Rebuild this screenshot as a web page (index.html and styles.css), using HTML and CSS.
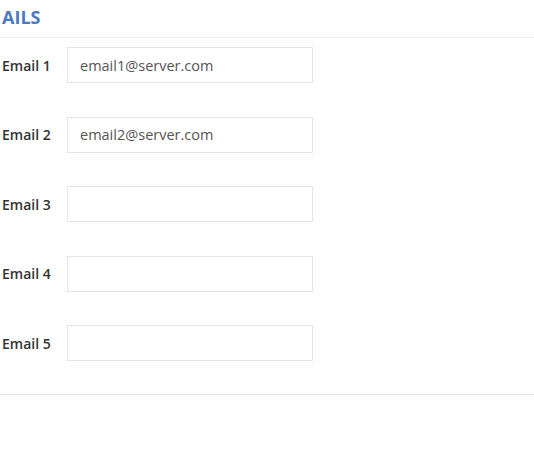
FILE: index.html
```html
<!DOCTYPE html>
<html lang="en">
<head>
  <meta charset="UTF-8">
  <title>Emails</title>
  <link rel="stylesheet" href="styles.css">
</head>
<body>
  <div class="panel">
    <h3 class="panel-title">AILS</h3>

    <div class="form-body">
      <div class="form-group">
        <label for="email1">Email 1</label>
        <input type="text" id="email1" value="email1@server.com" />
      </div>
      <div class="form-group">
        <label for="email2">Email 2</label>
        <input type="text" id="email2" value="email2@server.com" />
      </div>
      <div class="form-group">
        <label for="email3">Email 3</label>
        <input type="text" id="email3" />
      </div>
      <div class="form-group">
        <label for="email4">Email 4</label>
        <input type="text" id="email4" />
      </div>
      <div class="form-group">
        <label for="email5">Email 5</label>
        <input type="text" id="email5" />
      </div>
    </div>
  </div>
</body>
</html>
```

FILE: styles.css
```css
body {
  font-family: "Open Sans", Arial, sans-serif;
  background: #fefefe;
  margin: 0;
  padding: 0;
  color: #333;
}

.panel {
  padding-top: 5px;
}

.panel-title {
  margin: 0;
  padding: 0 2px 8px;
  font-size: 18px;
  line-height: 24px;
  font-weight: 700;
  color: #4a7ac4;
  border-bottom: 1px solid #eeeeee;
}

.form-body {
  display: flex;
  flex-direction: column;
  gap: 33.5px;
  padding: 9px 0 33px 2px;
  border-bottom: 1px solid #e5e5e5;
}

.form-group {
  display: flex;
  align-items: center;
}

label {
  width: 65px;
  font-size: 14px;
  font-weight: 600;
  color: #333;
}

input[type="text"] {
  box-sizing: border-box;
  width: 246px;
  height: 36px;
  padding: 6px 12px;
  border: 1px solid #e5e5e5;
  border-radius: 0;
  background: #fff;
  font-family: "Open Sans", Arial, sans-serif;
  font-size: 14.5px;
  color: #555;
  outline: none;
}
```
